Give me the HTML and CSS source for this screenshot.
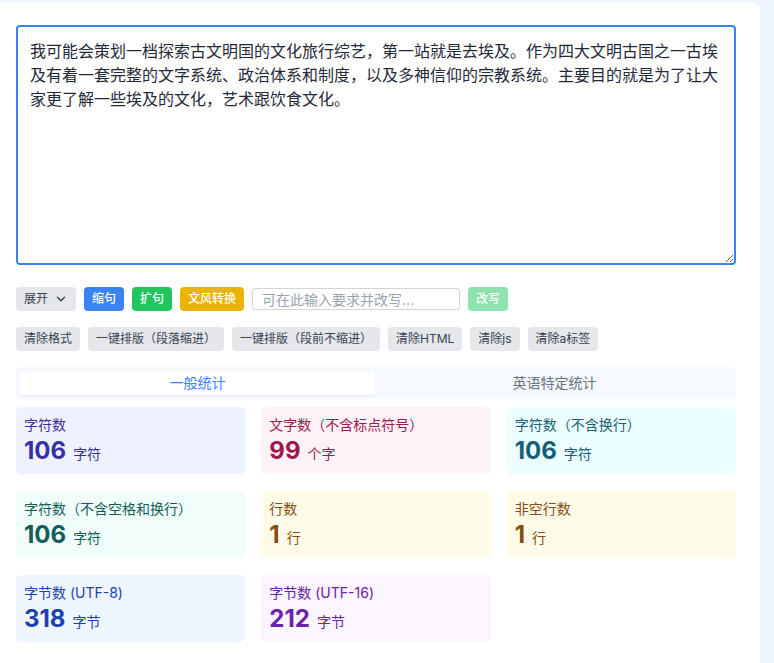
FILE: index.html
```html
<!DOCTYPE html>
<html lang="zh-CN">
  <head>
    <meta charset="UTF-8" />
    <meta name="viewport" content="width=device-width, initial-scale=1.0" />
    <title>字数统计</title>
    <link rel="stylesheet" href="styles.css">
  </head>
  <body>
    <div class="panel">
      <!-- editor start -->
      <textarea class="editor">我可能会策划一档探索古文明国的文化旅行综艺，第一站就是去埃及。作为四大文明古国之一古埃及有着一套完整的文字系统、政治体系和制度，以及多神信仰的宗教系统。主要目的就是为了让大家更了解一些埃及的文化，艺术跟饮食文化。</textarea>
      <!-- editor end -->

      <div class="toolbar">
        <button class="btn btn-gray">展开
          <svg class="chev" viewBox="0 0 16 16" width="14" height="14"><path d="M4 6l4 4 4-4" fill="none" stroke="#374151" stroke-width="1.6" stroke-linecap="round" stroke-linejoin="round"/></svg>
        </button>
        <button class="btn btn-blue">缩句</button>
        <button class="btn btn-green">扩句</button>
        <button class="btn btn-yellow">文风转换</button>
        <input class="prompt" type="text" placeholder="可在此输入要求并改写...">
        <button class="btn btn-green btn-off">改写</button>
      </div>

      <div class="toolbar">
        <button class="btn btn-gray">清除格式</button>
        <button class="btn btn-gray">一键排版（段落缩进）</button>
        <button class="btn btn-gray">一键排版（段前不缩进）</button>
        <button class="btn btn-gray">清除HTML</button>
        <button class="btn btn-gray">清除js</button>
        <button class="btn btn-gray">清除a标签</button>
      </div>

      <!-- stats start -->
      <div class="tabs">
        <div class="tab active">一般统计</div>
        <div class="tab">英语特定统计</div>
      </div>

      <div class="stats">
        <div class="stat indigo">
          <div class="label">字符数</div>
          <div class="value">106<span class="unit">字符</span></div>
        </div>
        <div class="stat pink">
          <div class="label">文字数（不含标点符号）</div>
          <div class="value">99<span class="unit">个字</span></div>
        </div>
        <div class="stat cyan">
          <div class="label">字符数（不含换行）</div>
          <div class="value">106<span class="unit">字符</span></div>
        </div>
        <div class="stat teal">
          <div class="label">字符数（不含空格和换行）</div>
          <div class="value">106<span class="unit">字符</span></div>
        </div>
        <div class="stat yellow">
          <div class="label">行数</div>
          <div class="value">1<span class="unit">行</span></div>
        </div>
        <div class="stat yellow">
          <div class="label">非空行数</div>
          <div class="value">1<span class="unit">行</span></div>
        </div>
        <div class="stat blue">
          <div class="label">字节数 (UTF-8)</div>
          <div class="value">318<span class="unit">字节</span></div>
        </div>
        <div class="stat purple">
          <div class="label">字节数 (UTF-16)</div>
          <div class="value">212<span class="unit">字节</span></div>
        </div>
      </div>
      <!-- stats end -->
    </div>
  </body>
</html>
```

FILE: styles.css
```css
*{
    padding: 0;
    margin: 0;
    box-sizing: border-box;
}
body{
    background: #eff6ff;
    font-family: Inter, "Noto Sans CJK SC", sans-serif;
    color: #1f2937;
    padding-top: 2px;
}
.panel{
    width: 760px;
    height: 700px;
    background: #fff;
    border-top-right-radius: 8px;
    padding: 23px 24px 0 16px;
    box-shadow: 0 1px 2px rgba(0,0,0,0.04);
}
.editor{
    display: block;
    width: 720px;
    height: 240px;
    border: 2px solid #3b82f6;
    border-radius: 4px;
    padding: 12px;
    font-family: Inter, "Noto Sans CJK SC", sans-serif;
    font-size: 16px;
    line-height: 24px;
    color: #1f2937;
    outline: none;
    resize: vertical;
    margin-bottom: 22px;
}
.toolbar{
    display: flex;
    align-items: center;
    gap: 8px;
    margin-bottom: 16px;
}
.btn{
    display: flex;
    align-items: center;
    height: 24px;
    padding: 0 8px;
    border: none;
    border-radius: 4px;
    font-family: Inter, "Noto Sans CJK SC", sans-serif;
    font-size: 12px;
    line-height: 16px;
    cursor: pointer;
}
.btn-gray{
    background: #e5e7eb;
    color: #374151;
}
.btn-blue{
    background: #3b82f6;
    color: #fff;
    font-weight: 500;
}
.btn-green{
    background: #22c55e;
    color: #fff;
    font-weight: 500;
}
.btn-yellow{
    background: #eab308;
    color: #fff;
    font-weight: 500;
}
.btn-off{
    opacity: 0.5;
}
.chev{
    margin-left: 6px;
}
.prompt{
    width: 208px;
    height: 22px;
    border: 1px solid #d1d5db;
    border-radius: 3px;
    padding: 0 9px;
    font-family: Inter, "Noto Sans CJK SC", sans-serif;
    font-size: 14px;
    color: #374151;
    outline: none;
}
.prompt::placeholder{
    color: #9ca3af;
}
.tabs{
    display: flex;
    gap: 2px;
    background: #f5f8fe;
    border-radius: 4px;
    padding: 4px;
    margin-bottom: 8px;
}
.tab{
    flex: 1;
    height: 24px;
    line-height: 24px;
    text-align: center;
    font-size: 14px;
    color: #6b7280;
    border-radius: 2px;
}
.tab.active{
    background: #fff;
    color: #3b82f6;
    box-shadow: 0 1px 2px rgba(0,0,0,0.05);
}
.stats{
    display: grid;
    grid-template-columns: repeat(3, 1fr);
    gap: 17px 16px;
}
.stat{
    height: 67px;
    border-radius: 5px;
    padding: 8px;
}
.label{
    font-size: 14px;
    line-height: 20px;
}
.value{
    font-size: 24px;
    line-height: 32px;
    font-weight: 700;
}
.unit{
    font-size: 14px;
    font-weight: 400;
    margin-left: 7px;
}
.indigo{ background: #eef2ff; color: #3730a3; }
.pink{ background: #fdf2f8; color: #9d174d; }
.cyan{ background: #ecfeff; color: #155e75; }
.teal{ background: #f0fdfa; color: #115e59; }
.yellow{ background: #fefce8; color: #854d0e; }
.blue{ background: #eff6ff; color: #1e40af; }
.purple{ background: #faf5ff; color: #6b21a8; }
```
